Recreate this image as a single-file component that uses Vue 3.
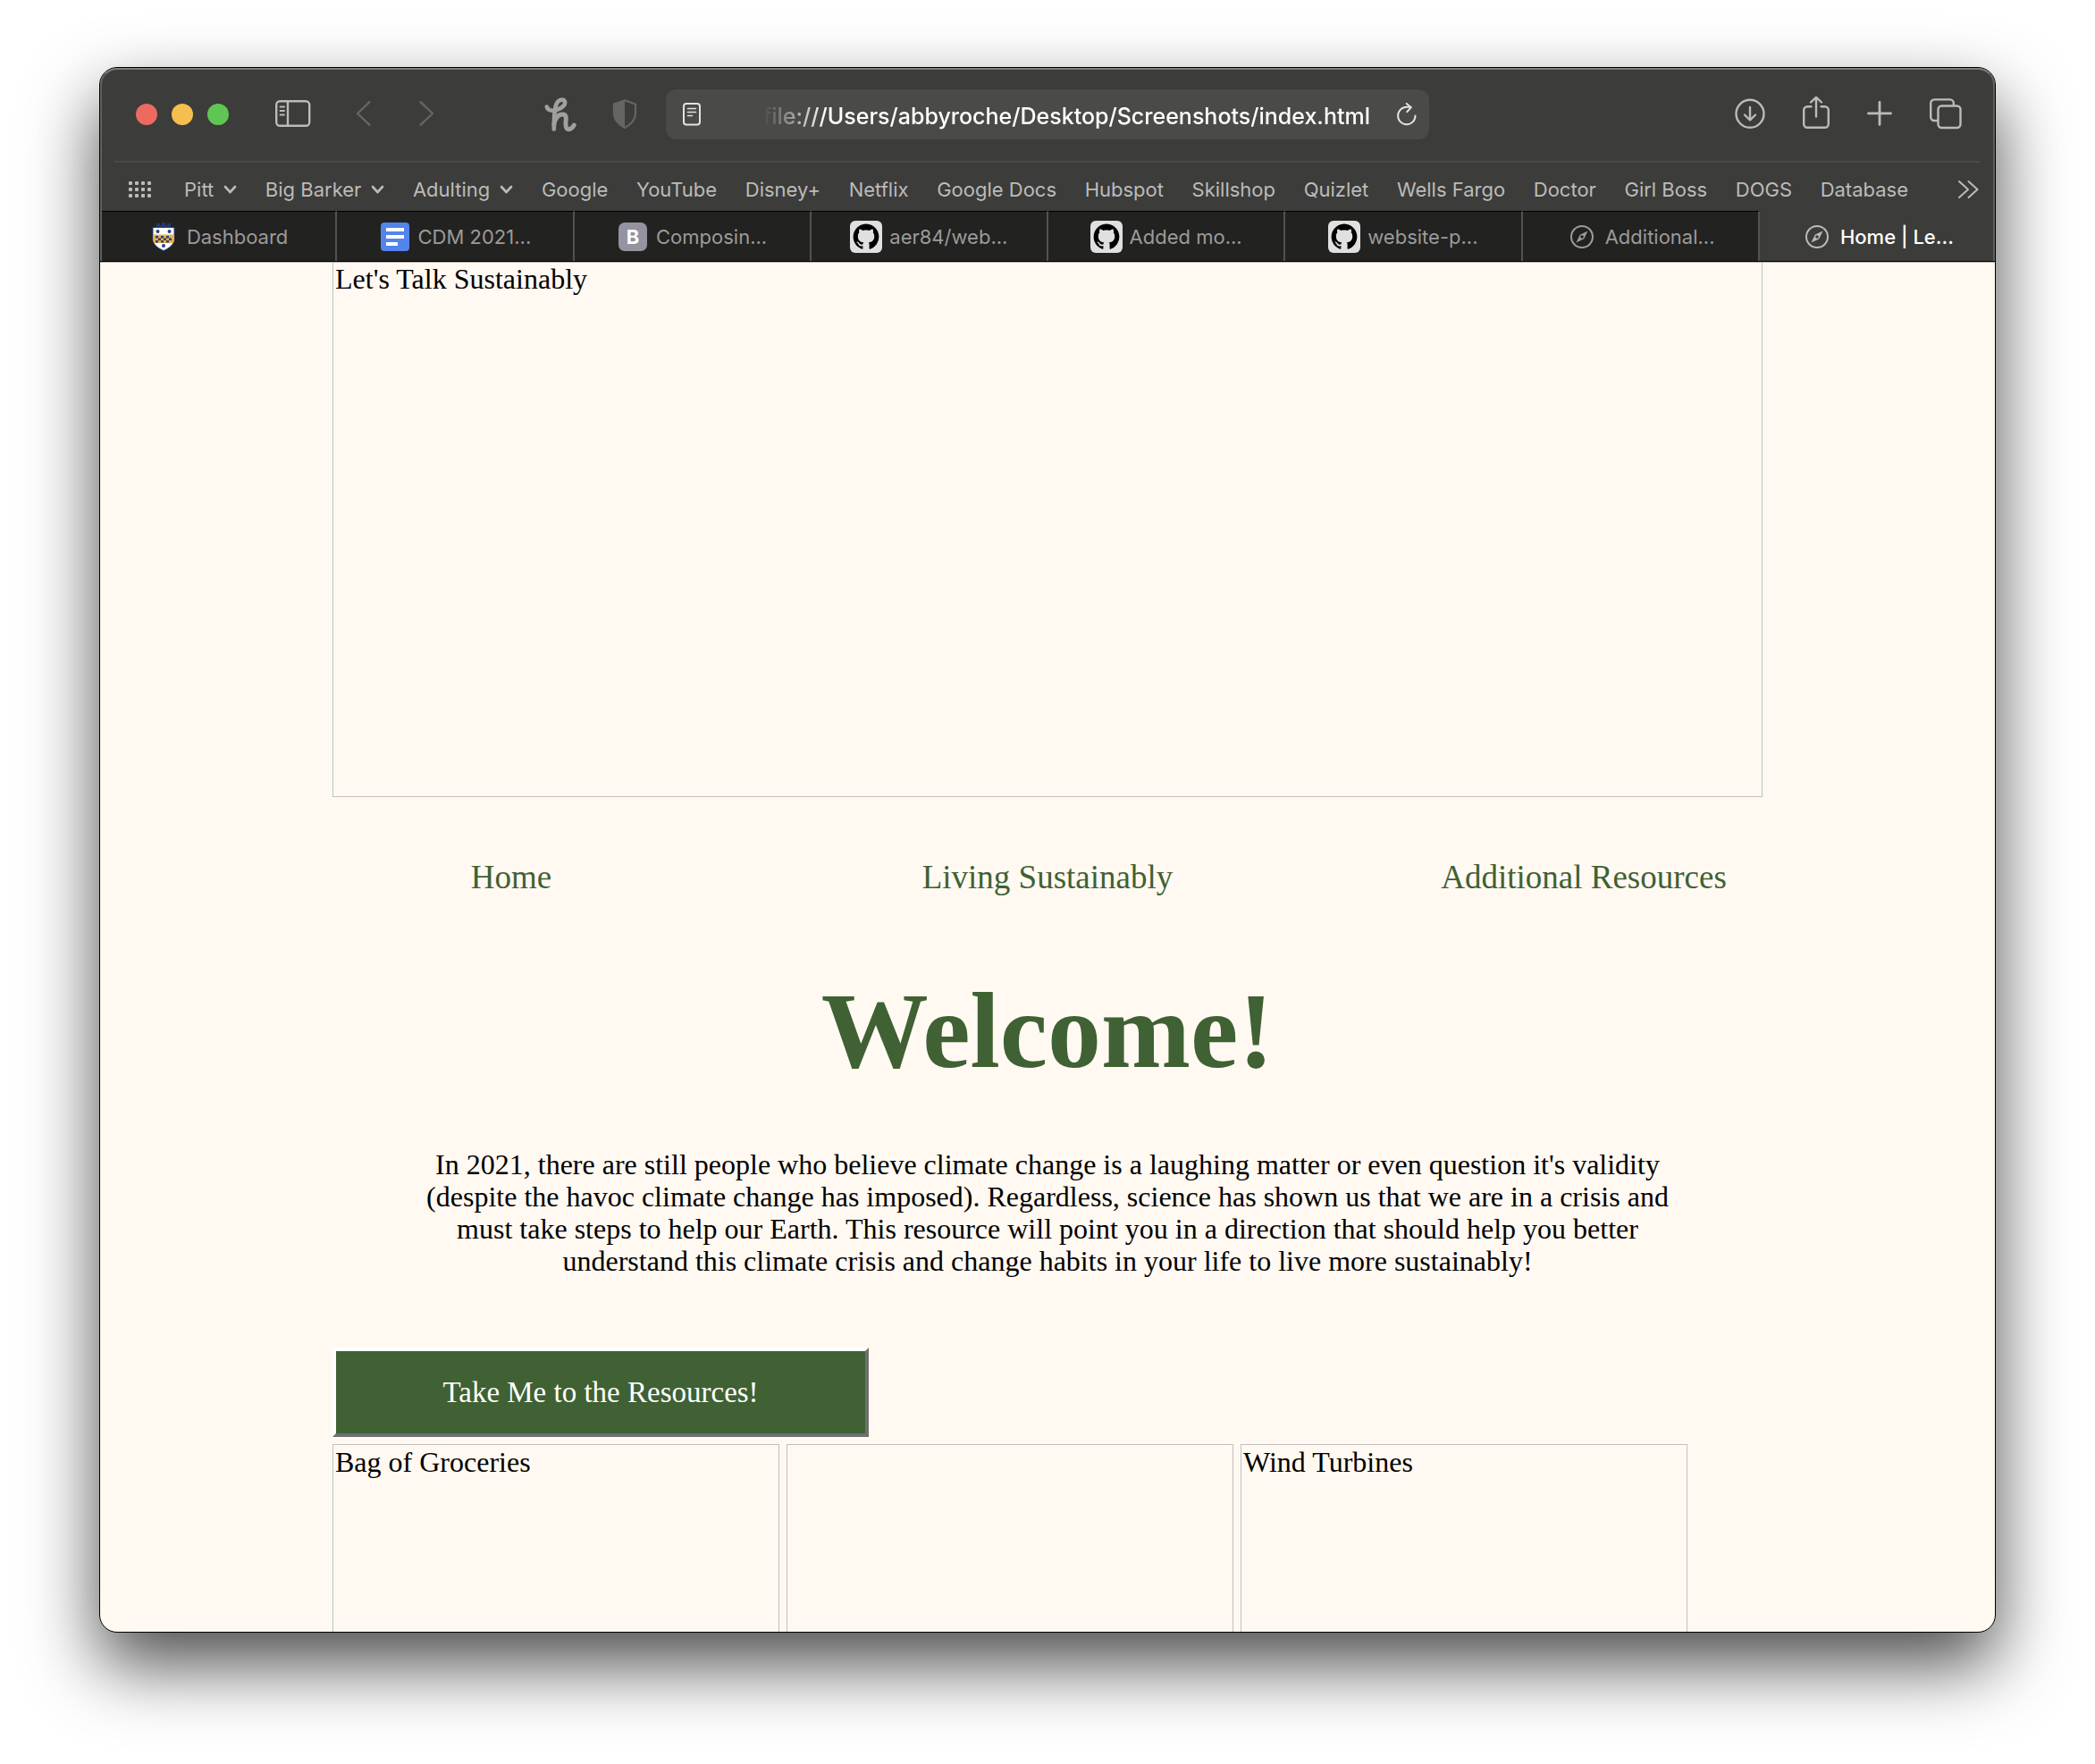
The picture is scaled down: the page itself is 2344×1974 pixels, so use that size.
<script setup>
import { ref } from 'vue'

const address = ref('file:///Users/abbyroche/Desktop/Screenshots/index.html')

const bookmarks = [
  { name: 'Pitt', folder: true },
  { name: 'Big Barker', folder: true },
  { name: 'Adulting', folder: true },
  { name: 'Google' },
  { name: 'YouTube' },
  { name: 'Disney+' },
  { name: 'Netflix' },
  { name: 'Google Docs' },
  { name: 'Hubspot' },
  { name: 'Skillshop' },
  { name: 'Quizlet' },
  { name: 'Wells Fargo' },
  { name: 'Doctor' },
  { name: 'Girl Boss' },
  { name: 'DOGS' },
  { name: 'Database' },
]

const tabs = [
  { title: 'Dashboard', icon: 'pitt' },
  { title: 'CDM 2021...', icon: 'docs' },
  { title: 'Composin...', icon: 'letter' },
  { title: 'aer84/web...', icon: 'github' },
  { title: 'Added mo...', icon: 'github' },
  { title: 'website-p...', icon: 'github' },
  { title: 'Additional...', icon: 'compass' },
  { title: 'Home | Le...', icon: 'compass' },
]
const activeTab = ref(7)

const pictures = ['Bag of Groceries', '', 'Wind Turbines']
</script>

<template>
  <div class="desktop">
    <div class="window">
      <header class="chrome">
        <div class="toolbar">
          <div class="tools tools-left">
            <div class="lights">
              <button class="light red" aria-label="Close"></button>
              <button class="light yellow" aria-label="Minimize"></button>
              <button class="light green" aria-label="Zoom"></button>
            </div>
            <button class="tool sidebar" aria-label="Sidebar">
              <svg width="40" height="40" viewBox="0 0 40 40" fill="none" stroke="#bbbbb9" stroke-width="2.4" stroke-linecap="round">
                <rect x="1.2" y="5.2" width="37" height="27.6" rx="4" />
                <path d="M14 5.5v27" />
                <path d="M5.500 11.500h4.500M5.500 16h4.500M5.500 20.500h4.500" stroke-width="1.800" />
              </svg>
            </button>
            <div class="history">
              <button class="tool" aria-label="Back">
                <svg width="18" height="40" viewBox="0 0 18 40" fill="none" stroke="#656563" stroke-width="2.4" stroke-linecap="round" stroke-linejoin="round"><path d="M15.500 6.200L2 19l13.500 12.800" /></svg>
              </button>
              <button class="tool" aria-label="Forward">
                <svg width="18" height="40" viewBox="0 0 18 40" fill="none" stroke="#656563" stroke-width="2.4" stroke-linecap="round" stroke-linejoin="round"><path d="M2.500 6.200L16 19L2.500 31.800" /></svg>
              </button>
            </div>
            <div class="extensions">
              <button class="tool" aria-label="Honey">
                <svg width="36" height="40" viewBox="0 0 36 40" fill="none" stroke="#a0a09f" stroke-width="5" stroke-linecap="round" stroke-linejoin="round">
                  <path d="M2.800 11.500C4 15.500 8.500 16.500 14 15C20.500 13 24 8.500 23 5.800C22 2.600 16.500 2.800 14 7.500C11.300 12.500 11 21 10.800 36.500" stroke-width="4.600" />
                  <path d="M10.800 31C12.500 23.500 16.500 20 20.500 20C25 20 24.500 24 24 29C23.500 36 26 38 29.500 36C31.300 35 32.500 34 33.200 32" />
                </svg>
              </button>
              <button class="tool" aria-label="Privacy report">
                <svg width="28" height="40" viewBox="0 0 28 40">
                  <path d="M14 4.200L26 8.500V19C26 27 20.500 31.500 14 35C7.500 31.500 2 27 2 19V8.500Z" fill="none" stroke="#656563" stroke-width="2.200" stroke-linejoin="round" />
                  <path d="M14 4.200V35C7.500 31.500 2 27 2 19V8.500Z" fill="#656563" />
                </svg>
              </button>
            </div>
          </div>

          <div class="address">
            <svg width="20" height="26" viewBox="0 0 20 26" fill="none" stroke="#e2e2e1" stroke-width="2" stroke-linecap="round">
              <rect x="1" y="1" width="18" height="23.500" rx="3" />
              <path d="M5.500 6.500h9M5.500 10.500h9M5.500 14.500h5" stroke-width="1.600" />
            </svg>
            <input v-model="address" class="url" type="text" aria-label="Address" spellcheck="false" />
            <button class="tool" aria-label="Reload">
              <svg width="22" height="26" viewBox="0 0 22 26" fill="none" stroke="#e2e2e1" stroke-width="2" stroke-linecap="round" stroke-linejoin="round">
                <path d="M20.500 14.500A9.700 9.700 0 1 1 10.800 4.800H15.500" />
                <path d="M10.800 1L15.600 5.300L11.300 10.200" />
              </svg>
            </button>
          </div>

          <div class="tools tools-right">
            <button class="tool" aria-label="Downloads">
              <svg width="34" height="40" viewBox="0 0 34 40" fill="none" stroke="#bbbbb9" stroke-width="2.400" stroke-linecap="round" stroke-linejoin="round">
                <circle cx="17" cy="19.300" r="15.500" /><path d="M17 12v14M11 20.500l6 6l6-6" />
              </svg>
            </button>
            <button class="tool" aria-label="Share">
              <svg width="30" height="40" viewBox="0 0 30 40" fill="none" stroke="#bbbbb9" stroke-width="2.400" stroke-linecap="round" stroke-linejoin="round">
                <path d="M9.500 11.200H5.200a4 4 0 0 0-4 4v15.600a4 4 0 0 0 4 4h19.600a4 4 0 0 0 4-4V15.200a4 4 0 0 0-4-4H20.500M15 22.500V1M9 6.500L15 .8l6 5.700" />
              </svg>
            </button>
            <button class="tool" aria-label="New tab">
              <svg width="28" height="40" viewBox="0 0 28 40" fill="none" stroke="#bbbbb9" stroke-width="2.800" stroke-linecap="round"><path d="M14 6.400v25M1.500 18.900h25" /></svg>
            </button>
            <button class="tool" aria-label="Tab overview">
              <svg width="36" height="40" viewBox="0 0 36 40" fill="none" stroke="#bbbbb9" stroke-width="2.400" stroke-linejoin="round">
                <rect x="9.500" y="10.500" width="25" height="24.500" rx="4" />
                <path d="M9.500 27H5.200a4 4 0 0 1-4-4V7.400a4 4 0 0 1 4-4h17.600a4 4 0 0 1 4 4V10" />
              </svg>
            </button>
          </div>
        </div>

        <nav class="bookmarks" aria-label="Favorites">
          <button class="tool" aria-label="Show favorites">
            <svg width="26" height="22" viewBox="0 0 26 22" fill="#bbbbb9">
              <template v-for="row in 3" :key="row">
                <rect v-for="col in 4" :key="col" :x="(col - 1) * 7" :y="(row - 1) * 7 + 2" width="4" height="4" rx="1" />
              </template>
            </svg>
          </button>
          <ul class="bookmark-list">
            <li v-for="item in bookmarks" :key="item.name">
              <button v-if="item.folder" class="bookmark">
                {{ item.name }}
                <svg width="15" height="12" viewBox="0 0 15 12" fill="none" stroke="#bbbbb9" stroke-width="2.600" stroke-linecap="round" stroke-linejoin="round"><path d="M2 3l5.500 6L13 3" /></svg>
              </button>
              <a v-else class="bookmark" href="#">{{ item.name }}</a>
            </li>
          </ul>
          <button class="tool" aria-label="More favorites">
            <svg width="24" height="22" viewBox="0 0 24 22" fill="none" stroke="#bbbbb9" stroke-width="2" stroke-linecap="round" stroke-linejoin="round"><path d="M2 2l10 9L2 20M12.500 2l10 9l-10 9" /></svg>
          </button>
        </nav>

        <div class="tabs" role="tablist">
          <button
            v-for="(tab, i) in tabs"
            :key="tab.title"
            class="tab"
            :class="{ active: i === activeTab }"
            role="tab"
            :aria-selected="i === activeTab"
            @click="activeTab = i"
          >
            <span class="favicon">
              <svg v-if="tab.icon === 'pitt'" width="26" height="32" viewBox="0 0 26 32">
                <path d="M5 1h4v2h2V0h4v3h2V1h4v5H5z" fill="#24356f" />
                <path d="M1 5.500h24V18c0 6.500-5 10.500-12 13.500C6 28.500 1 24.500 1 18z" fill="#fff" stroke="#2b3f86" stroke-width="1" />
                <path d="M1 13.500h24V18c0 2-.4 3.500-1.200 5H2.200C1.400 21.500 1 20 1 18z" fill="#e9b13f" />
                <path d="M4 15h3v2.500h3V15h3v2.500h3V15h3v2.500h3V20h-3v2.500h-3V20h-3v2.500h-3V20H7v2.500H4V20h3v-2.500H4zM10 17.500V20h3v-2.500zM16 17.500V20h3v-2.500z" fill="#2b3f86" fill-rule="evenodd" />
                <circle cx="6.500" cy="10" r="2" fill="#2b3f86" /><circle cx="19.500" cy="10" r="2" fill="#2b3f86" /><circle cx="13" cy="26" r="2" fill="#2b3f86" />
              </svg>
              <svg v-else-if="tab.icon === 'docs'" width="32" height="32" viewBox="0 0 32 32">
                <rect width="32" height="32" rx="4" fill="#5384ec" />
                <path d="M6 6h20v4H6zM6 14h20v4H6zM6 22h13v4H6z" fill="#fff" />
              </svg>
              <span v-else-if="tab.icon === 'letter'" class="letter">B</span>
              <svg v-else-if="tab.icon === 'github'" width="36" height="36" viewBox="0 0 36 36">
                <rect width="36" height="36" rx="6" fill="#e0e0e0" />
                <g transform="translate(3.600 3.600) scale(1.800)">
                  <path d="M8 0C3.580 0 0 3.580 0 8c0 3.540 2.290 6.530 5.470 7.590.4.070.55-.17.55-.38 0-.19-.01-.82-.01-1.490-2.010.37-2.530-.49-2.690-.94-.09-.23-.48-.94-.82-1.130-.28-.15-.68-.52-.01-.53.63-.01 1.080.58 1.230.82.72 1.210 1.870.87 2.330.66.07-.52.28-.87.51-1.070-1.780-.2-3.640-.89-3.640-3.950 0-.87.31-1.590.82-2.150-.08-.2-.36-1.020.08-2.120 0 0 .67-.21 2.200.82.64-.18 1.320-.27 2-.27s1.360.09 2 .27c1.530-1.040 2.200-.82 2.200-.82.44 1.100.16 1.920.08 2.120.51.56.82 1.270.82 2.150 0 3.070-1.870 3.750-3.650 3.950.29.25.54.73.54 1.480 0 1.070-.01 1.930-.01 2.200 0 .21.15.46.55.38A8.010 8.010 0 0 0 16 8c0-4.420-3.580-8-8-8z" fill="#000" />
                </g>
              </svg>
              <svg v-else width="26" height="26" viewBox="0 0 26 26" fill="none" stroke="currentColor" stroke-width="2">
                <circle cx="13" cy="13" r="12" />
                <path d="M19.500 6.500L15.300 15.300L6.500 19.500L10.700 10.700Z" fill="currentColor" stroke="none" />
                <circle cx="13" cy="13" r="1.800" class="pivot" stroke="none" />
              </svg>
            </span>
            <span>{{ tab.title }}</span>
          </button>
        </div>
      </header>

      <main class="page">
        <div class="content">
          <div class="missing hero" role="img">Let's Talk Sustainably</div>
          <nav class="site-nav" aria-label="Site">
            <a href="#">Home</a>
            <a href="#">Living Sustainably</a>
            <a href="#">Additional Resources</a>
          </nav>
          <h1>Welcome!</h1>
          <p>
            In 2021, there are still people who believe climate change is a laughing matter or even question it's
            validity (despite the havoc climate change has imposed). Regardless, science has shown us that we are in a
            crisis and must take steps to help our Earth. This resource will point you in a direction that should help
            you better understand this climate crisis and change habits in your life to live more sustainably!
          </p>
          <button class="cta">Take Me to the Resources!</button>
          <div class="gallery">
            <div v-for="(alt, i) in pictures" :key="i" class="missing" role="img">{{ alt }}</div>
          </div>
        </div>
      </main>
    </div>
  </div>
</template>

<style>
body {
  background: #fff;
}
</style>

<style scoped>
.desktop {
  box-sizing: border-box;
  height: 100vh;
  padding: 75px 111px 147px;
  overflow: hidden;
  font-family: Inter, 'Liberation Sans', sans-serif;
}

.window {
  box-sizing: border-box;
  height: 100%;
  display: flex;
  flex-direction: column;
  overflow: hidden;
  border: 1px solid #000;
  border-radius: 20px;
  background: #fff9f2;
  box-shadow: 0 36px 80px rgba(0, 0, 0, 0.7);
}

button {
  margin: 0;
  padding: 0;
  border: 0;
  background: none;
  font: inherit;
  color: inherit;
}

a {
  color: inherit;
  text-decoration: none;
}

svg {
  display: block;
  flex: none;
}

/* Browser chrome */
.chrome {
  position: relative;
  flex: none;
  background: #3c3c3a;
  border-bottom: 1px solid #000;
}

.chrome::after {
  content: '';
  position: absolute;
  inset: 0;
  border: 2px solid #60605d;
  border-top-color: #7c7d77;
  border-bottom: 0;
  border-radius: 19px 19px 0 0;
  pointer-events: none;
}

.toolbar {
  display: grid;
  grid-template-columns: 1fr minmax(0, 854px) 1fr;
  align-items: center;
  height: 104px;
  margin: 0 16px;
  border-bottom: 2px solid #494947;
}

.tools {
  display: flex;
  align-items: center;
}

.tools-left {
  padding: 0 32px 0 24px;
}

.tools-right {
  justify-content: flex-end;
  gap: 42px;
  padding-right: 21px;
}

.lights {
  display: flex;
  gap: 16px;
}

.light {
  width: 24px;
  height: 24px;
  border-radius: 50%;
}

.red { background: #ed6a5f; }
.yellow { background: #f5bf4f; }
.green { background: #61c555; }

.sidebar {
  margin: 0 50px 0 52px;
}

.history {
  display: flex;
  gap: 52px;
}

.extensions {
  display: flex;
  gap: 40px;
  margin-left: auto;
}

.address {
  display: flex;
  align-items: center;
  height: 56px;
  box-sizing: border-box;
  padding: 0 14px 0 19px;
  border-radius: 12px;
  background: #4a4a48;
}

.url {
  flex: 1;
  min-width: 0;
  height: 40px;
  margin: 0 30px 0 60px;
  padding: 3px 0 0;
  border: 0;
  outline: 0;
  background: none;
  color: #fff;
  font: 500 25px/40px Inter, 'Liberation Sans', sans-serif;
  text-align: right;
  mask-image: linear-gradient(to right, transparent 10px, #000 80px);
}

.bookmarks {
  display: flex;
  align-items: center;
  height: 54px;
  padding: 6px 18px 0 32px;
  box-sizing: border-box;
  color: #bbbbb9;
  font-size: 22px;
  line-height: 28px;
}

.bookmark-list {
  flex: 1;
  display: flex;
  justify-content: space-between;
  margin: 0 55px 0 36px;
  padding: 0;
  list-style: none;
  white-space: nowrap;
}

.bookmark {
  display: flex;
  align-items: center;
  gap: 11px;
}

.tabs {
  display: flex;
}

.tab {
  flex: 1;
  min-width: 0;
  display: flex;
  align-items: center;
  justify-content: center;
  gap: 8px;
  height: 56px;
  box-sizing: border-box;
  border-top: 1px solid #000;
  border-right: 2px solid #525250;
  background: #222221;
  color: #9b9b99;
  font-size: 22px;
  white-space: nowrap;
}

.tab:last-child {
  border-right: 0;
}

.tab.active {
  border-color: transparent;
  background: none;
  color: #fff;
  font-weight: 500;
}

.favicon {
  flex: none;
  display: flex;
  align-items: center;
  justify-content: center;
  width: 36px;
  height: 36px;
}

.active .favicon {
  color: #bbbbb9;
}

.pivot {
  fill: #222221;
}

.active .pivot {
  fill: #3c3c3a;
}

.letter {
  width: 32px;
  border-radius: 7px;
  background: #9493a0;
  color: #fff;
  font-size: 22px;
  font-weight: 700;
  line-height: 32px;
}

/* Web page */
.page {
  flex: 1;
  min-height: 0;
  overflow: hidden;
  border-top: 1px solid #b9b5af;
  color: #000;
  font-family: 'Liberation Serif', serif;
  font-size: 32px;
  line-height: 36px;
}

.content {
  max-width: 1600px;
  margin: 0 auto;
}

.missing {
  box-sizing: border-box;
  height: 500px;
  padding: 1px 2px 0;
  border: 1px solid #c0c0c0;
}

.hero {
  height: 598px;
  padding-top: 0;
  border-top: 0;
}

.site-nav {
  display: grid;
  grid-template-columns: 1fr 2fr 1fr;
  margin-top: 68px;
  color: #3f6133;
  font-family: Georgia, 'Liberation Serif', serif;
  font-size: 37px;
  line-height: 44px;
  text-align: center;
}

h1 {
  margin: 86px 0 0;
  color: #3f6133;
  font-family: Georgia, 'Liberation Serif', serif;
  font-size: 120px;
  line-height: 128px;
  text-align: center;
}

p {
  margin: 67px auto 0;
  max-width: 1400px;
  text-align: center;
}

.cta {
  display: block;
  width: 600px;
  height: 100px;
  margin: 79px 0 8px;
  border: 4px solid;
  border-color: #fff #6f6f6f #6f6f6f #fff;
  background: #3f6133;
  color: #fff;
  font-family: Georgia, 'Liberation Serif', serif;
  font-size: 33px;
}

.gallery {
  display: grid;
  grid-template-columns: repeat(3, 500px);
  gap: 8px;
}
</style>
